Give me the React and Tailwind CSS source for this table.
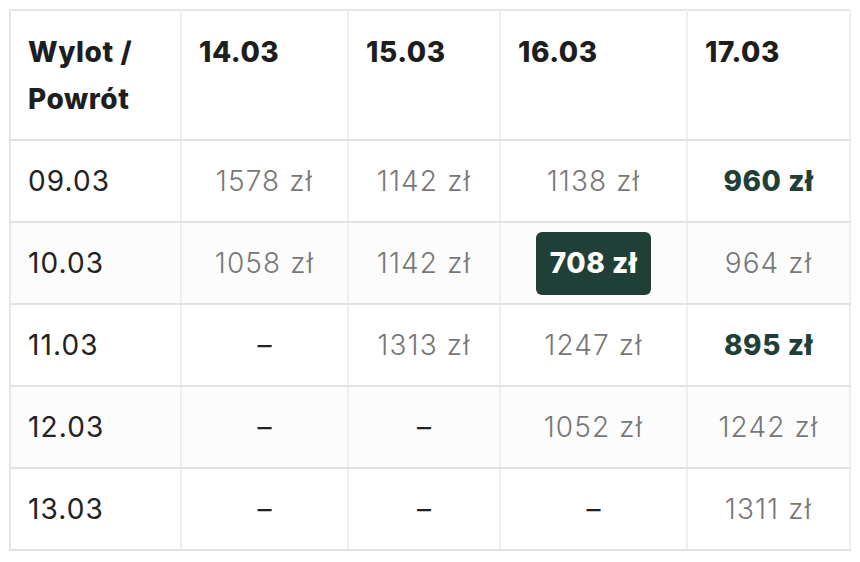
const cols = ['14.03', '15.03', '16.03', '17.03'];

// null = brak lotu, { v, best } = cena
const rows = [
  { date: '09.03', prices: [{ v: 1578 }, { v: 1142 }, { v: 1138 }, { v: 960, best: true }] },
  { date: '10.03', prices: [{ v: 1058 }, { v: 1142 }, { v: 708, top: true }, { v: 964 }] },
  { date: '11.03', prices: [null, { v: 1313 }, { v: 1247 }, { v: 895, best: true }] },
  { date: '12.03', prices: [null, null, { v: 1052 }, { v: 1242 }] },
  { date: '13.03', prices: [null, null, null, { v: 1311 }] },
];

const PriceCell = ({ price }) => {
  if (!price) return <span className="text-[#222]">–</span>;
  if (price.top) {
    return (
      <span className="inline-flex items-center justify-center w-[115px] h-[63px] rounded-md bg-[#1f3f37] text-white font-extrabold tracking-[0.02em]">
        {price.v} zł
      </span>
    );
  }
  if (price.best) return <span className="text-[#1f3f37] font-extrabold tracking-[0.02em]">{price.v} zł</span>;
  return <span className="text-[#777] font-light tracking-[0.04em]">{price.v} zł</span>;
};

const App = () => {
  return (
    <div className="w-[860px] h-[562px] bg-white pl-[9px] pt-[9px]" style={{ fontFamily: 'Inter, "Noto Sans", sans-serif' }}>
      <table className="table-fixed border-collapse border-2 border-[#e6e6e6] text-[28px]">
        <colgroup>
          <col className="w-[171px]" />
          <col className="w-[167px]" />
          <col className="w-[152px]" />
          <col className="w-[187px]" />
          <col className="w-[163px]" />
        </colgroup>
        <thead>
          <tr className="h-[130px] bg-white">
            <th className="align-top text-left font-extrabold text-[#1e1e1e] tracking-[0.02em] leading-[47px] px-[17px] pt-[18px] border-r-2 border-b-2 border-r-[#efefef] border-b-[#e2e2e2]">
              Wylot /<br />Powrót
            </th>
            {cols.map((c) => (
              <th key={c} className="align-top text-left font-extrabold text-[#1e1e1e] tracking-[0.02em] leading-[47px] px-[17px] pt-[18px] border-r-2 border-b-2 border-r-[#efefef] border-b-[#e2e2e2]">
                {c}
              </th>
            ))}
          </tr>
        </thead>
        <tbody>
          {rows.map((r, i) => (
            <tr key={r.date} className={`h-[82px] ${i % 2 === 1 ? 'bg-[#fcfcfc]' : 'bg-white'}`}>
              <td className="px-[17px] text-[#222] font-normal tracking-[0.04em] border-r-2 border-b-2 border-r-[#efefef] border-b-[#e2e2e2]">{r.date}</td>
              {r.prices.map((p, j) => (
                <td key={j} className="text-center border-r-2 border-b-2 border-r-[#efefef] border-b-[#e2e2e2]">
                  <PriceCell price={p} />
                </td>
              ))}
            </tr>
          ))}
        </tbody>
      </table>
    </div>
  );
};

export default App;
